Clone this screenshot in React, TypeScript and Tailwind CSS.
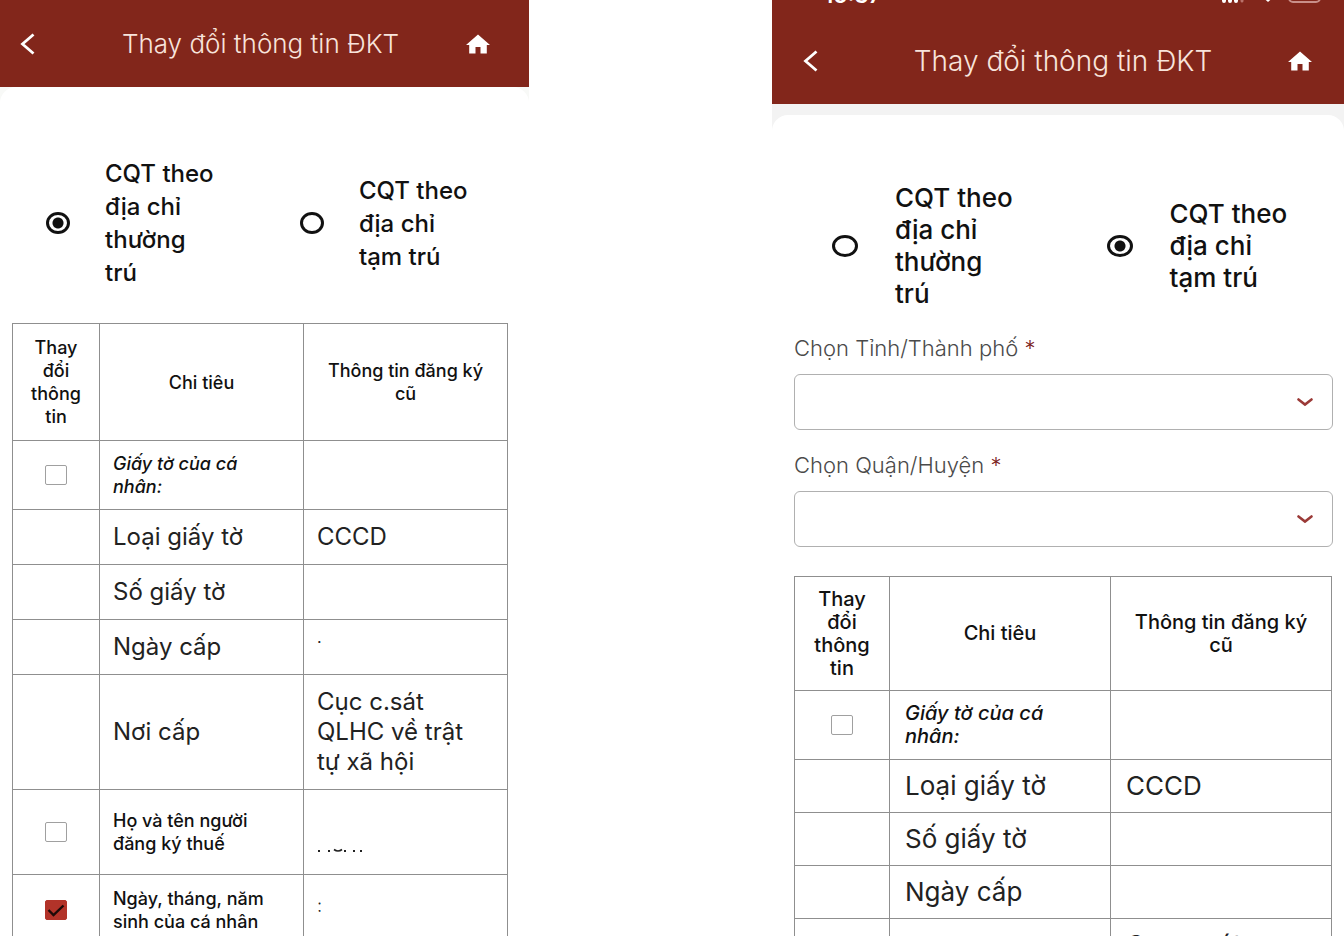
import React, { useState } from 'react';
import { clsx } from 'clsx';

type Address = 'permanent' | 'temporary';
type Size = 'base' | 'wide';

interface Row {
  id: string;
  label: string;
  value?: React.ReactNode;
  kind?: 'section' | 'heading';
  checked?: boolean;
}

const documentRows: Row[] = [
  { id: 'papers', label: 'Giấy tờ của cá nhân:', kind: 'section' },
  { id: 'type', label: 'Loại giấy tờ', value: 'CCCD' },
  { id: 'number', label: 'Số giấy tờ' },
];

const issuer: Row = {
  id: 'issuer',
  label: 'Nơi cấp',
  value: <span className="block w-[164px]">Cục c.sát QLHC về trật tự xã hội</span>,
};

// Personal values are redacted, only a few specks stay visible
const redactedName = (
  <svg className="mt-9" width="46" height="5" viewBox="0 0 46 5" fill="#222" aria-hidden="true">
    <path d="M1 2h2v2H1zM11 2h2v2h-2zM27 2h2v2h-2zM36 2h2v2h-2zM43 2h2v2h-2z" />
    <path d="M17 1.5q4 3 8 0" fill="none" stroke="#222" strokeWidth="1.6" />
  </svg>
);

const permanentRows: Row[] = [
  ...documentRows,
  { id: 'date', label: 'Ngày cấp', value: <span className="block h-8 text-base leading-3">.</span> },
  issuer,
  { id: 'name', label: 'Họ và tên người đăng ký thuế', kind: 'heading', value: redactedName },
  {
    id: 'birthday',
    label: 'Ngày, tháng, năm sinh của cá nhân',
    kind: 'heading',
    checked: true,
    value: <span className="block pb-2 text-lg leading-6 font-light">:</span>,
  },
];

const temporaryRows: Row[] = [...documentRows, { id: 'date', label: 'Ngày cấp' }, issuer];

const StatusBar = () => (
  <div className="flex h-5 shrink-0 items-end justify-between pr-[22px] pl-[52px] text-white">
    <span className="text-[22px] leading-5 font-semibold">16:37</span>
    <svg width="100" height="20" viewBox="0 0 100 20" fill="none" aria-hidden="true">
      <path d="M2 15v1M8 12v4M14 9v7" stroke="#fff" strokeWidth="4" strokeLinecap="round" />
      <path d="M20 6v10" stroke="#b9716a" strokeWidth="3" strokeLinecap="round" />
      <path d="M38 10q8-7 16 0l-8 7z" fill="#fff" />
      <rect x="67" y="3" width="31" height="14" rx="4" stroke="#c98f89" strokeWidth="2" />
      <rect x="70" y="6" width="12" height="9" rx="2" fill="#5b4a4a" />
    </svg>
  </div>
);

const Header = ({ size }: { size: Size }) => (
  <header
    className={clsx(
      'flex shrink-0 flex-col justify-end overflow-hidden bg-[#82261b]',
      size === 'wide' ? 'h-[104px]' : 'h-[87px]',
    )}
  >
    {size === 'wide' && <StatusBar />}
    <div
      className={clsx(
        'flex shrink-0 items-center',
        size === 'wide' ? 'h-[99px] pt-3 pr-8 pl-[31px]' : 'h-[87px] pr-[39px] pl-5',
      )}
    >
      <button type="button" aria-label="Quay lại">
        <svg width="15" height="22" viewBox="0 0 15 22" fill="none" aria-hidden="true">
          <path d="M13.5 1.5 2.5 11l11 9.5" stroke="#fff" strokeWidth="2.8" />
        </svg>
      </button>
      <h1
        className={clsx(
          'flex-1 pl-5 text-center leading-8 font-light whitespace-nowrap text-[#f8e4dc]',
          size === 'wide' ? 'text-[28px]' : 'text-[26px]',
        )}
      >
        Thay đổi thông tin ĐKT
      </h1>
      <button type="button" aria-label="Trang chủ">
        <svg width="24" height="20" viewBox="0 0 24 20" fill="#fff" aria-hidden="true">
          <path d="M12 0.5 24 11h-3.2v8.5h-6.3v-6.5h-5v6.5H3.2V11H0z" />
        </svg>
      </button>
    </div>
  </header>
);

interface AddressPickerProps {
  name: string;
  size: Size;
  initial: Address;
}

const AddressPicker = ({ name, size, initial }: AddressPickerProps) => {
  const [address, setAddress] = useState<Address>(initial);
  const options: { id: Address; label: string }[] = [
    { id: 'permanent', label: 'CQT theo địa chỉ thường trú' },
    { id: 'temporary', label: 'CQT theo địa chỉ tạm trú' },
  ];

  return (
    <div
      role="radiogroup"
      className={clsx('grid grid-cols-[48%_1fr]', size === 'wide' ? 'pt-[67px]' : 'pt-[70px]')}
    >
      {options.map(option => (
        <label
          key={option.id}
          className={clsx(
            'flex items-center font-medium text-[#111]',
            size === 'wide' ? 'gap-[37px] pl-[60px] text-[26px] leading-8' : 'gap-[35px] pl-[46px] text-2xl leading-[33px]',
          )}
        >
          <input
            type="radio"
            name={name}
            checked={address === option.id}
            onChange={() => setAddress(option.id)}
            className={clsx(
              'h-[22px] shrink-0 appearance-none rounded-[50%] border-[3px] border-[#111] bg-white checked:bg-[radial-gradient(circle,#111_5px,#fff_6px)]',
              size === 'wide' ? 'w-[26px]' : 'w-6',
            )}
          />
          <span className={size === 'wide' ? 'w-[124px]' : 'w-[116px]'}>{option.label}</span>
        </label>
      ))}
    </div>
  );
};

const SelectField = ({ id, label }: { id: string; label: string }) => (
  <div className="flex flex-col">
    <label htmlFor={id} className="text-[22px] leading-6 font-light text-[#4a4a4a]">
      {label} <span className="text-[#7a2020]">*</span>
    </label>
    <div className="relative mt-3.5">
      <select id={id} className="block h-14 w-full appearance-none rounded-md border border-[#b0b0b0] bg-white px-4">
        <option value="" />
      </select>
      <svg
        className="pointer-events-none absolute top-1/2 right-5 -translate-y-1/2"
        width="16"
        height="9"
        viewBox="0 0 16 9"
        fill="none"
        aria-hidden="true"
      >
        <path d="M1.5 2 8 7l6.5-5" stroke="#9b3a37" strokeWidth="2.6" strokeLinecap="round" />
      </svg>
    </div>
  </div>
);

const RowCheckbox = ({ label, checked = false }: { label: string; checked?: boolean }) => (
  <span className="relative mx-auto block h-5 w-[22px]">
    <input
      type="checkbox"
      aria-label={label}
      defaultChecked={checked}
      className="peer block h-5 w-[22px] appearance-none rounded-[2px] border border-[#a0a0a0] bg-white checked:border-[#b23329] checked:bg-[#b23329]"
    />
    <svg
      className="pointer-events-none absolute inset-0 hidden peer-checked:block"
      width="22"
      height="20"
      viewBox="0 0 22 20"
      fill="none"
      aria-hidden="true"
    >
      <path d="m3.5 10 5 5L18.5 5.5" stroke="#1c0a08" strokeWidth="2.4" />
    </svg>
  </span>
);

const InfoTable = ({ rows, size }: { rows: Row[]; size: Size }) => {
  const wide = size === 'wide';
  const cell = clsx('border border-[#8f8f8f]', wide ? 'px-[15px]' : 'px-[13px]');
  const small = clsx('font-medium text-[#111]', wide ? 'text-xl leading-[23px]' : 'text-lg leading-[23px]');
  const large = clsx('text-[#222]', wide ? 'text-[26px] leading-7' : 'text-2xl leading-[30px]');

  return (
    <table className="w-full table-fixed border-collapse">
      <colgroup>
        <col className={wide ? 'w-[95px]' : 'w-[87px]'} />
        <col />
        <col />
      </colgroup>
      <thead>
        <tr className={clsx(small, wide ? 'h-[114px]' : 'h-[117px]')}>
          <th className="border border-[#8f8f8f] px-3 font-medium">Thay đổi thông tin</th>
          <th className={clsx(cell, 'font-medium')}>Chi tiêu</th>
          <th className="border border-[#8f8f8f] px-5 font-medium">Thông tin đăng ký cũ</th>
        </tr>
      </thead>
      <tbody>
        {rows.map(row => (
          <tr key={row.id}>
            <td className="border border-[#8f8f8f]">
              {row.kind && <RowCheckbox label={row.label} checked={row.checked} />}
            </td>
            <td
              className={clsx(
                cell,
                row.kind ? small : large,
                row.kind === 'section' && 'italic',
                row.kind === 'heading' && (row.checked ? 'py-3' : 'py-[19px]'),
                row.kind === 'section' && 'py-[11px]',
                !row.kind && 'py-3',
              )}
            >
              <span className={clsx('block', row.kind && 'w-[160px]')}>{row.label}</span>
            </td>
            <td className={clsx(cell, large, row.id === 'issuer' && 'py-3')}>{row.value}</td>
          </tr>
        ))}
      </tbody>
    </table>
  );
};

export default function App() {
  return (
    <main className="grid h-screen grid-cols-[529fr_572fr] gap-x-[243px] overflow-hidden bg-white font-['Inter','Noto_Sans',sans-serif]">
      <section className="flex min-w-0 flex-col">
        <Header size="base" />
        <div className="bg-[#f8f9f7]">
          <div className="rounded-t-2xl bg-white pb-8">
            <AddressPicker name="address-permanent" size="base" initial="permanent" />
            <div className="mt-[34px] pr-[21px] pl-3">
              <InfoTable rows={permanentRows} size="base" />
            </div>
          </div>
        </div>
      </section>

      <section className="flex min-w-0 flex-col">
        <Header size="wide" />
        <div className="bg-[#f3f3f3] pt-[11px]">
          <div className="rounded-t-2xl bg-white pb-8">
            <AddressPicker name="address-temporary" size="wide" initial="temporary" />
            <div className="mt-[26px] flex flex-col gap-[23px] pr-[11px] pl-[22px]">
              <SelectField id="province" label="Chọn Tỉnh/Thành phố" />
              <SelectField id="district" label="Chọn Quận/Huyện" />
            </div>
            <div className="mt-[29px] pr-3 pl-[22px]">
              <InfoTable rows={temporaryRows} size="wide" />
            </div>
          </div>
        </div>
      </section>
    </main>
  );
}
